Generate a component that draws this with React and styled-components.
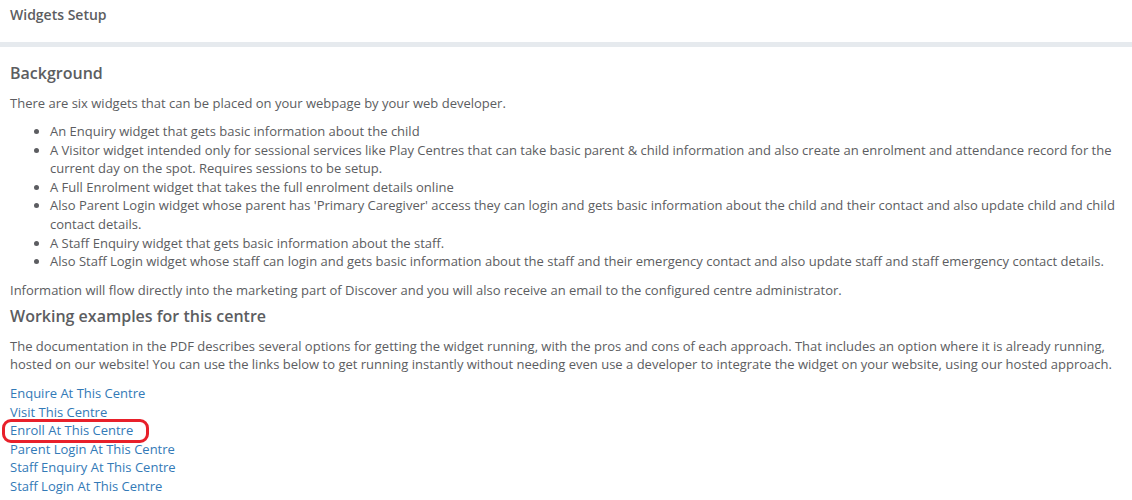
import React from 'react'
import styled, { createGlobalStyle } from 'styled-components'

const GlobalStyle = createGlobalStyle`
  body {
    margin: 0;
    background: #fff;
    font-family: "Open Sans", "Liberation Sans", sans-serif;
    font-size: 13px;
    line-height: 1.42857;
    color: #5c5d61;
  }
`

const Page = styled.div`
  width: 1132px;
`

const Header = styled.div`
  box-sizing: border-box;
  height: 47px;
  padding: 5px 10px 0;
  font-weight: 600;
  font-size: 14px;
  color: #5c5d61;
  border-bottom: 5px solid #e6eaee;
`

const Content = styled.div`
  padding: 0 10px 20px;
`

const Heading = styled.h3`
  font-size: 16px;
  font-weight: 600;
  line-height: 1.1;
  margin: ${p => (p.$first ? '18px 0 11px' : '0 0 11px')};
  color: #5c5d61;
`

const Para = styled.p`
  margin: 0 0 ${p => (p.$tight ? '9px' : '10px')};
`

const List = styled.ul`
  margin: 0 0 10px;
  padding-left: 40px;
`

const Links = styled.div`
  display: flex;
  flex-direction: column;
  align-items: flex-start;
`

const WidgetLink = styled.a`
  position: relative;
  color: #337ab7;
  text-decoration: none;
  cursor: pointer;
  ${p => p.$marked && `
    &::after {
      content: '';
      position: absolute;
      left: -8px;
      right: -16px;
      top: -2px;
      bottom: -3px;
      border: 3px solid #e8202a;
      border-radius: 9px;
    }
  `}
`

const bullets = [
  'An Enquiry widget that gets basic information about the child',
  'A Visitor widget intended only for sessional services like Play Centres that can take basic parent & child information and also create an enrolment and attendance record for the current day on the spot. Requires sessions to be setup.',
  'A Full Enrolment widget that takes the full enrolment details online',
  "Also Parent Login widget whose parent has 'Primary Caregiver' access they can login and gets basic information about the child and their contact and also update child and child contact details.",
  'A Staff Enquiry widget that gets basic information about the staff.',
  'Also Staff Login widget whose staff can login and gets basic information about the staff and their emergency contact and also update staff and staff emergency contact details.',
]

const links = [
  { label: 'Enquire At This Centre' },
  { label: 'Visit This Centre' },
  { label: 'Enroll At This Centre', marked: true },
  { label: 'Parent Login At This Centre' },
  { label: 'Staff Enquiry At This Centre' },
  { label: 'Staff Login At This Centre' },
]

export default function App() {
  return (
    <Page>
      <GlobalStyle />
      <Header>Widgets Setup</Header>
      <Content>
        <Heading $first>Background</Heading>
        <Para>There are six widgets that can be placed on your webpage by your web developer.</Para>
        <List>
          {bullets.map((b, i) => (
            <li key={i}>{b}</li>
          ))}
        </List>
        <Para $tight>
          Information will flow directly into the marketing part of Discover and you will also receive an email to the configured centre administrator.
        </Para>
        <Heading>Working examples for this centre</Heading>
        <Para>
          The documentation in the PDF describes several options for getting the widget running, with the pros and cons of each approach. That includes an option where it is already running, hosted on our website! You can use the links below to get running instantly without needing even use a developer to integrate the widget on your website, using our hosted approach.
        </Para>
        <Links>
          {links.map(l => (
            <WidgetLink key={l.label} $marked={l.marked}>{l.label}</WidgetLink>
          ))}
        </Links>
      </Content>
    </Page>
  )
}
